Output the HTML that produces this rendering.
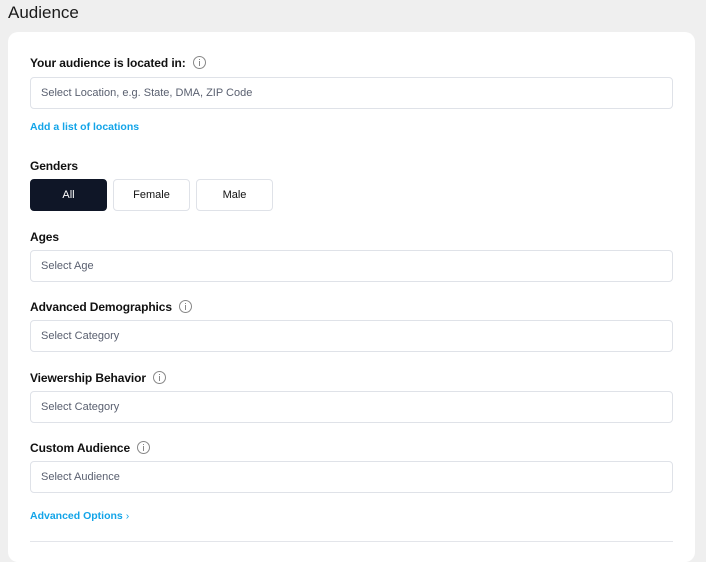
<!DOCTYPE html>
<html><head><style>
body{margin:0;width:706px;height:544px;background:#efefef;font-family:"Liberation Sans",sans-serif;position:relative;overflow:hidden}
.a{position:absolute}
.t{left:8px;top:3px;font-size:17px;color:#1a1a1a}
.card{left:8px;top:32px;width:687px;height:530px;background:#fff;border-radius:10px}
.l{left:30px;font-size:12px;font-weight:bold;color:#111;line-height:16px;letter-spacing:-0.1px}
.i{display:inline-block;width:11px;height:11px;border:1px solid #888;border-radius:50%;vertical-align:-2px;margin-left:7px;position:relative}
.i:after{content:"";position:absolute;left:5px;top:4px;width:1px;height:5px;background:#888}
.i:before{content:"";position:absolute;left:5px;top:2px;width:1px;height:1px;background:#888}
.in{left:30px;border:1px solid #dfe2e8;border-radius:4px;font-size:11px;color:#5a6070;line-height:30px;padding-left:10px;box-sizing:border-box;width:643px;height:32px}
.lk{left:30px;font-size:10.5px;font-weight:bold;color:#12a4e8}
.b{top:179px;width:77px;height:32px;border:1px solid #dfe2e8;border-radius:4px;box-sizing:border-box;font-size:11px;text-align:center;line-height:30px;color:#111}
</style></head><body>
<div class="a t">Audience</div>
<div class="a card"></div>
<div class="a l" style="top:55px">Your audience is located in:<span class="i"></span></div>
<div class="a in" style="top:77px">Select Location, e.g. State, DMA, ZIP Code</div>
<div class="a lk" style="top:121px">Add a list of locations</div>
<div class="a l" style="top:158px">Genders</div>
<div class="a b" style="left:30px;background:#0f1627;color:#fff;border-color:#0f1627">All</div>
<div class="a b" style="left:113px">Female</div>
<div class="a b" style="left:196px">Male</div>
<div class="a l" style="top:229px">Ages</div>
<div class="a in" style="top:250px">Select Age</div>
<div class="a l" style="top:299px">Advanced Demographics<span class="i"></span></div>
<div class="a in" style="top:320px">Select Category</div>
<div class="a l" style="top:370px">Viewership Behavior<span class="i"></span></div>
<div class="a in" style="top:391px">Select Category</div>
<div class="a l" style="top:440px">Custom Audience<span class="i"></span></div>
<div class="a in" style="top:461px">Select Audience</div>
<div class="a lk" style="top:510px">Advanced Options <span style="font-weight:normal">&#x203A;</span></div>
<div class="a" style="left:30px;top:541px;width:643px;height:1px;background:#e3e5ea"></div>
</body></html>
